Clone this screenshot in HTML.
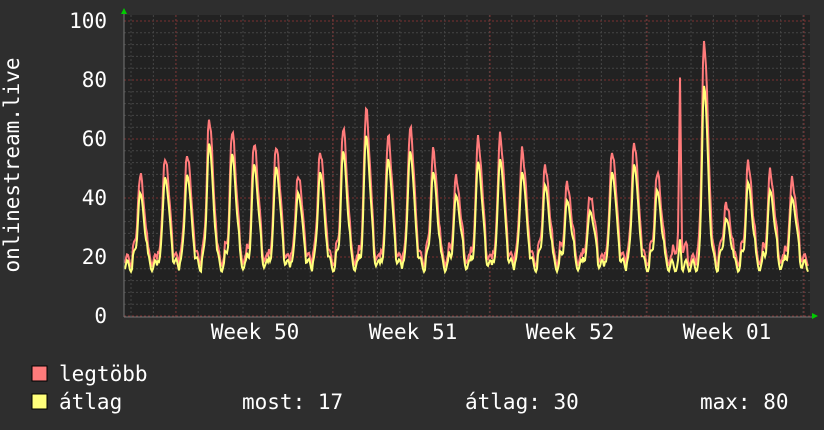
<!DOCTYPE html>
<html><head><meta charset="utf-8"><style>
html,body{margin:0;padding:0;background:#2e2e2e;width:824px;height:430px;overflow:hidden}
svg{display:block}
text{font-family:"DejaVu Sans Mono","Liberation Mono",monospace;fill:#fff;font-size:21px}
</style></head><body>
<svg id="s" width="824" height="430" xmlns="http://www.w3.org/2000/svg">
<rect x="0" y="0" width="824" height="430" fill="#2e2e2e"/>
<rect x="124" y="15" width="686" height="302" fill="#222"/>
<g id="grid"></g>
<polyline id="red" fill="none" stroke="#ff7b7b" stroke-width="2"/>
<polyline id="yel" fill="none" stroke="#ffff7b" stroke-width="2"/>
<line x1="124" y1="317" x2="812" y2="317" stroke="#777" stroke-width="1"/>
<line x1="124" y1="12" x2="124" y2="317" stroke="#777" stroke-width="1"/>
<polygon points="121,14 127,14 124,8" fill="#0c0"/>
<polygon points="812,313 812,319 818,316" fill="#0c0"/>
<text x="107" y="28" text-anchor="end">100</text>
<text x="107" y="87" text-anchor="end">80</text>
<text x="107" y="146" text-anchor="end">60</text>
<text x="107" y="205" text-anchor="end">40</text>
<text x="107" y="264" text-anchor="end">20</text>
<text x="107" y="323" text-anchor="end">0</text>
<text transform="translate(19,165) rotate(-90)" text-anchor="middle">onlinestream.live</text>
<text x="255" y="339" text-anchor="middle">Week 50</text>
<text x="413" y="339" text-anchor="middle">Week 51</text>
<text x="570" y="339" text-anchor="middle">Week 52</text>
<text x="727" y="339" text-anchor="middle">Week 01</text>
<rect x="32" y="366" width="15" height="15" fill="#ff7b7b" stroke="#000"/>
<rect x="32" y="394" width="15" height="15" fill="#ffff7b" stroke="#000"/>
<text x="59" y="381">legtöbb</text>
<text x="59" y="409">átlag</text>
<text x="242" y="409">most: 17</text>
<text x="465" y="409">átlag: 30</text>
<text x="700" y="409">max: 80</text>
</svg>
<script>
var g=document.getElementById('grid'),h='';
for(var v=0;v<=100;v+=4){var y=316-v*2.95;var maj=v%20==0;
h+='<line x1="124" x2="810" y1="'+y+'" y2="'+y+'" stroke="'+(maj?'#7a3030':'#444')+'" stroke-dasharray="2,2"/>';}
for(var x=131;x<810;x+=22.4){
h+='<line y1="15" y2="317" x1="'+x+'" x2="'+x+'" stroke="#444" stroke-dasharray="2,2"/>';}
[176,333,490,647,804].forEach(function(x){h+='<line y1="15" y2="317" x1="'+x+'" x2="'+x+'" stroke="#7a3030" stroke-dasharray="2,2"/>';});
g.innerHTML=h;
var pk=[[140,47],[165,53],[187,54],[209,66],[232,62],[254,58],[276,57],[298,47],[320,55],[343,63],[366,69],[388,60],[410,63],[433,55],[456,46],[478,59],[500,60],[522,55],[545,50],[567,44],[590,40],[612,55],[634,58],[657,48],[680,80],[704,92],[726,37],[748,51],[770,48],[792,45]];
var r=[],yl=[];
for(var x=125;x<=808;x++){
 var best=null;for(var i=0;i<pk.length;i++){if(best===null||Math.abs(pk[i][0]-x)<Math.abs(best[0]-x))best=pk[i];}
 var d=x-best[0];var f=d<0?Math.exp(-d*d/8):Math.exp(-d*d/30);
 var wob=Math.sin(x*1.7)*1.5;
 var base=19+Math.sin(x*0.9)*2;
 var pv=best[1]-3; if(best[0]==680) f=Math.exp(-d*d/1.5);
 var rv=base+(pv-base)*f+wob*f+ (Math.abs(d)<8?4:0);
 var yv=base-2+(pv*0.88-base+2)*f+(Math.abs(d)<8?3:0);
 if(best[0]==680) yv=base-2+(28-base)*f;
 if(best[0]==704) yv=base-2+(80-base)*f;
 r.push(x+','+(316-rv*2.95).toFixed(1));yl.push(x+','+(316-yv*2.95).toFixed(1));
}
document.getElementById('red').setAttribute('points',r.join(' '));
document.getElementById('yel').setAttribute('points',yl.join(' '));
</script>
</body></html>
